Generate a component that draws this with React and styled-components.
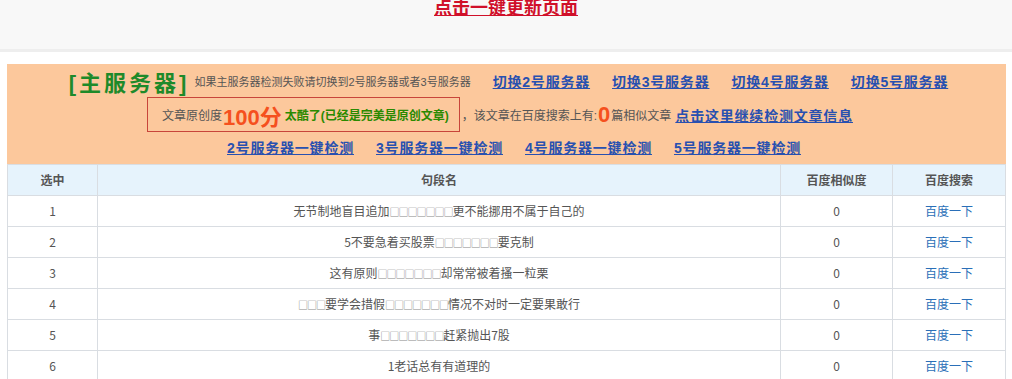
import React from "react";
import styled, { createGlobalStyle } from "styled-components";

const GlobalStyle = createGlobalStyle`
  body {
    margin: 0;
    background: #fff;
    font-family: "Liberation Sans", "Noto Sans CJK SC", sans-serif;
    color: #555;
  }
`;

const TopBar = styled.div`
  height: 49px;
  background: #f8f8f8;
  border-bottom: 3px solid #eeeeee;
  overflow: hidden;
  text-align: center;
`;

const UpdateLink = styled.a`
  display: inline-block;
  margin-top: -7px;
  font-family: "Liberation Serif", "Noto Sans CJK SC", serif;
  font-size: 18px;
  font-weight: bold;
  line-height: 24px;
  color: #d0102a;
  text-decoration: underline;
  cursor: pointer;
`;

const Main = styled.div`
  padding: 12px 6px 0 7px;
`;

const Panel = styled.div`
  background: #fcc89c;
  padding: 2px 0 3px;
  display: flex;
  flex-direction: column;
  align-items: center;
`;

const Line = styled.div`
  display: flex;
  align-items: center;
  justify-content: center;
  height: ${(p) => p.$h || 32}px;
  padding-left: ${(p) => p.$pl || 0}px;
  padding-right: ${(p) => p.$pr || 0}px;
  white-space: nowrap;
`;

const MainTitle = styled.span`
  font-size: 22px;
  font-weight: bold;
  letter-spacing: 3px;
  color: #1e8a2a;
  margin-right: 5px;
`;

const Note = styled.span`
  font-size: ${(p) => p.$size || 12}px;
  color: #555;
`;

const NavLink = styled.a`
  font-size: 14px;
  font-weight: bold;
  letter-spacing: 0.8px;
  color: #2850b0;
  text-decoration: underline;
  margin-left: ${(p) => p.$gap ?? 22}px;
  cursor: pointer;
`;

const ScoreBox = styled.div`
  display: flex;
  align-items: center;
  height: 33px;
  padding: 0 10px 0 14px;
  border: 1px solid #c8453a;
  margin-right: 2px;
`;

const Big = styled.span`
  font-size: 22px;
  font-weight: bold;
  color: #f5501e;
  margin: 0 1px;
`;

const Cool = styled.span`
  font-size: 12px;
  font-weight: bold;
  color: #2a8a00;
  margin-left: 2px;
`;

const Table = styled.table`
  width: 100%;
  border-collapse: collapse;
  font-size: 12px;
  line-height: 16px;
  color: #555;
  font-family: "Noto Sans CJK SC", sans-serif;
`;

const Th = styled.th`
  height: 30px;
  padding: 0;
  background: #e6f3fc;
  border: 1px solid #d9dde2;
  font-weight: bold;
  color: #555;
  width: ${(p) => p.$w || "auto"};
`;

const Td = styled.td`
  height: 30px;
  padding: 0;
  border: 1px solid #d9dde2;
  text-align: center;
`;

const Box = styled.span`
  font-size: 10px;
  letter-spacing: -1px;
  color: #888;
`;

const SearchLink = styled.a`
  color: #2a6fb8;
  cursor: pointer;
`;

const rows = [
  ["无节制地盲目追加", "□□□□□□□", "更不能挪用不属于自己的"],
  ["5不要急着买股票", "□□□□□□□", "要克制"],
  ["这有原则", "□□□□□□□", "却常常被着搔一粒栗"],
  ["", "□□□", "要学会措假", "□□□□□□□", "情况不对时一定要果敢行"],
  ["事", "□□□□□□□", "赶紧抛出7股"],
  ["1老话总有有道理的"],
];

const renderRow = (parts) =>
  parts.map((p, i) =>
    p.startsWith("□") ? <Box key={i}>{p}</Box> : <React.Fragment key={i}>{p}</React.Fragment>
  );

export default function App() {
  return (
    <>
      <GlobalStyle />
      <TopBar>
        <UpdateLink>点击一键更新页面</UpdateLink>
      </TopBar>
      <Main>
        <Panel>
          <Line $h={30} $pl={4}>
            <MainTitle>[主服务器]</MainTitle>
            <Note $size={11}>如果主服务器检测失败请切换到2号服务器或者3号服务器</Note>
            <NavLink $gap={22}>切换2号服务器</NavLink>
            <NavLink>切换3号服务器</NavLink>
            <NavLink>切换4号服务器</NavLink>
            <NavLink>切换5号服务器</NavLink>
          </Line>
          <Line $h={37} $pr={13}>
            <ScoreBox>
              <Note>文章原创度</Note>
              <Big>100分</Big>
              <Cool>太酷了(已经是完美是原创文章)</Cool>
            </ScoreBox>
            <Note>，该文章在百度搜索上有:</Note>
            <Big>0</Big>
            <Note>篇相似文章</Note>
            <NavLink $gap={4}>点击这里继续检测文章信息</NavLink>
          </Line>
          <Line $h={28} $pl={15}>
            <NavLink $gap={0}>2号服务器一键检测</NavLink>
            <NavLink>3号服务器一键检测</NavLink>
            <NavLink>4号服务器一键检测</NavLink>
            <NavLink>5号服务器一键检测</NavLink>
          </Line>
        </Panel>
        <Table>
          <thead>
            <tr>
              <Th $w="89px">选中</Th>
              <Th>句段名</Th>
              <Th $w="111px">百度相似度</Th>
              <Th $w="112px">百度搜索</Th>
            </tr>
          </thead>
          <tbody>
            {rows.map((r, i) => (
              <tr key={i}>
                <Td>{i + 1}</Td>
                <Td>{renderRow(r)}</Td>
                <Td>0</Td>
                <Td>
                  <SearchLink>百度一下</SearchLink>
                </Td>
              </tr>
            ))}
          </tbody>
        </Table>
      </Main>
    </>
  );
}
